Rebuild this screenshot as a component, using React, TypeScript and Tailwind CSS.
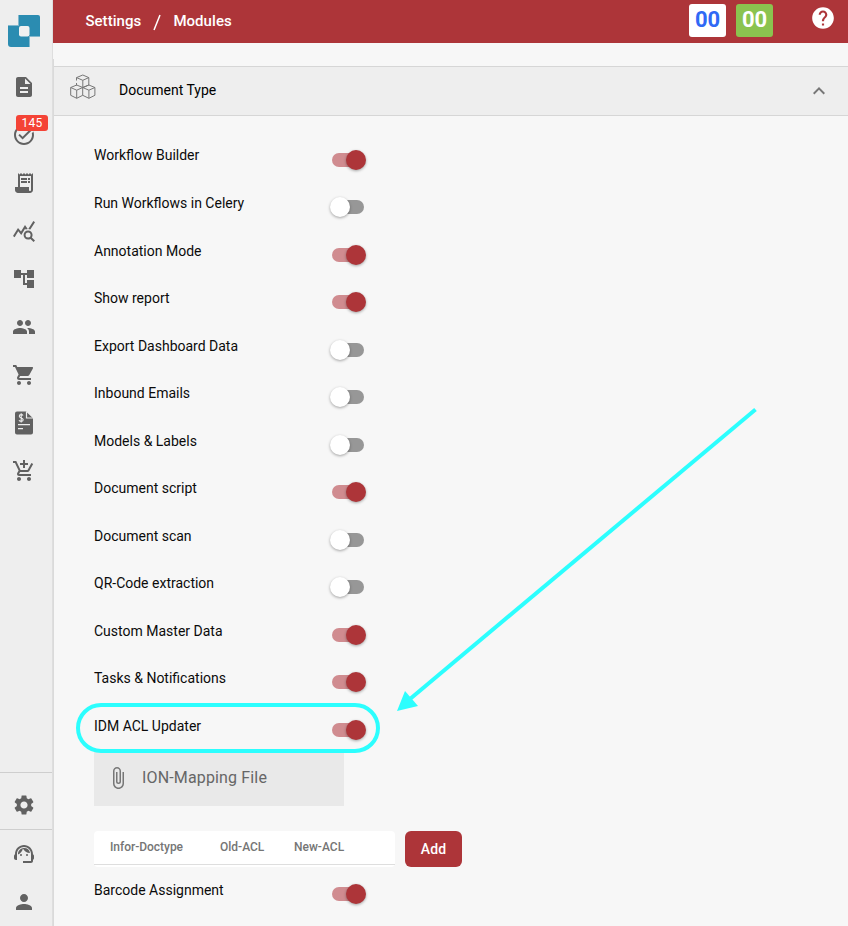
import React from "react";
import {
  MdDescription, MdTaskAlt, MdReceiptLong, MdQueryStats, MdAccountTree, MdPeople,
  MdShoppingCart, MdAddShoppingCart, MdSettings, MdSupportAgent, MdPerson, MdHelp,
  MdExpandLess, MdAttachFile,
} from "react-icons/md";

const modules: [string, boolean][] = [
  ["Workflow Builder", true],
  ["Run Workflows in Celery", false],
  ["Annotation Mode", true],
  ["Show report", true],
  ["Export Dashboard Data", false],
  ["Inbound Emails", false],
  ["Models & Labels", false],
  ["Document script", true],
  ["Document scan", false],
  ["QR-Code extraction", false],
  ["Custom Master Data", true],
  ["Tasks & Notifications", true],
  ["IDM ACL Updater", true],
];

function Toggle({ on }: { on: boolean }) {
  return (
    <div className={`mt-[8.5px] flex h-[14px] w-8 items-center rounded-full ${on ? "bg-[#d08c90]" : "bg-[#979797]"}`}>
      <div
        className={`size-5 shrink-0 rounded-full shadow-[0_1px_3px_rgba(0,0,0,0.35)] ${on ? "ml-[14px] bg-[#ad3539]" : "-ml-[2px] bg-white"}`}
      />
    </div>
  );
}

function Row({ label, on }: { label: string; on: boolean }) {
  return (
    <div className="flex h-[47.5px] shrink-0 items-center">
      <div className="w-[238px] text-sm leading-5 text-[#0b0b0b]">{label}</div>
      <Toggle on={on} />
    </div>
  );
}

function InvoiceIcon() {
  return (
    <svg width="18" height="24" viewBox="0 0 18 24" fill="none">
      <path d="M2 .5h9l7 6.800V21.500a2 2 0 0 1-2 2H2a2 2 0 0 1-2-2v-19a2 2 0 0 1 2-2Z" fill="#616161" />
      <path d="M11.500 1v6H18" stroke="#eee" strokeWidth="1.200" />
      <path d="M8 4.500C7.500 3.300 4.300 3.200 4.300 5.200c0 2.100 3.900 1.400 3.900 3.600 0 2.100-3.600 1.900-4.200.5M6.200 2.300v9.200" stroke="#eee" strokeWidth="1.100" />
      <path d="M3 13.700h12M3 17.600h5" stroke="#eee" strokeWidth="1.300" />
    </svg>
  );
}

function Cubes() {
  return (
    <svg width="26" height="26" viewBox="0 0 26 26" fill="none" stroke="#777" strokeWidth="1" strokeLinejoin="round">
      <path d="M6.500 11.500V9M6.500 6.500V3.600L12.800 1l6 2.600V11l-6 2.600M6.500 3.600l6.300 2.700 6-2.700M12.800 6.300v7.300" />
      <path d="M.7 13.500l6-2.500 6 2.500v7.800l-6 3-6-3ZM.7 13.500l6 2.700 6-2.700M6.700 16.200v8" />
      <path d="M12.700 13.500l6.200-2.500 6 2.500v7.800l-6 3-6.200-3M12.700 13.500l6.200 2.700 6-2.700M18.900 16.200v8" />
    </svg>
  );
}

function NavItem({ children }: { children: React.ReactNode }) {
  return <div className="flex h-12 w-12 items-center justify-center">{children}</div>;
}

export default function App() {
  return (
    <div className="relative flex h-[926px] w-[848px] overflow-hidden bg-[#f7f7f7] font-['Roboto','Liberation_Sans',sans-serif]">
      <aside className="flex w-[53px] shrink-0 flex-col border-r border-[#dedede] bg-[#eeeeee] text-[#616161]">
        <div className="h-[63px] pt-[15px] pl-2">
          <svg width="32" height="32" viewBox="0 0 32 32">
            <path d="M10.500 0H30a2 2 0 0 1 2 2v19.500H21.500V32H3a3 3 0 0 1-3-3V10.500h10.500Z" fill="#2b8cb1" />
            <path d="M10.500 0v10.500H0M32 21.500H21.500V32" stroke="#83b8cd" fill="none" />
            <rect x="11" y="11" width="10.500" height="10.500" rx="2" fill="#f1f1f1" />
          </svg>
        </div>
        <NavItem><MdDescription size={24} /></NavItem>
        <div className="relative">
          <NavItem><MdTaskAlt size={24} /></NavItem>
          <div className="absolute top-1 left-4 flex h-4 w-8 items-center justify-center rounded-[3px] bg-[#f44336] text-xs tracking-[0.2px] text-white">145</div>
        </div>
        <NavItem><MdReceiptLong size={24} /></NavItem>
        <NavItem><MdQueryStats size={24} /></NavItem>
        <NavItem><MdAccountTree size={24} /></NavItem>
        <NavItem><MdPeople size={24} /></NavItem>
        <NavItem><MdShoppingCart size={24} /></NavItem>
        <NavItem><InvoiceIcon /></NavItem>
        <NavItem><MdAddShoppingCart size={24} /></NavItem>
        <div className="mt-auto flex h-[58px] items-center border-y border-[#cecece] pt-2">
          <NavItem><MdSettings size={24} /></NavItem>
        </div>
        <NavItem><MdSupportAgent size={24} /></NavItem>
        <NavItem><MdPerson size={24} /></NavItem>
      </aside>

      <main className="flex min-w-0 flex-1 flex-col">
        <header className="flex h-[43px] shrink-0 items-center bg-[#ad3539] pl-[32.400px] text-white">
          <div className="flex text-[15px] leading-5 font-medium tracking-[0.050px]">
            <span className="w-[68px]">Settings</span>
            <svg className="mr-3 mt-[3px]" width="8" height="18" viewBox="0 0 8 18"><path d="M7 1 1 16" stroke="white" strokeWidth="1.500" /></svg>
            <span>Modules</span>
          </div>
          <div className="mr-[12px] mb-[3px] ml-auto flex items-center">
            <div className="flex h-[33px] w-[37px] items-center justify-center rounded-[3px] bg-white pb-0.5 text-[22px] font-bold text-[#3069f5]">00</div>
            <div className="ml-[10px] flex h-[33px] w-[37px] items-center justify-center rounded-[3px] bg-[#8bc34f] pb-0.5 text-[22px] font-bold">00</div>
            <MdHelp className="mb-1 ml-[37px]" size={26} />
          </div>
        </header>

        <div className="mt-4 flex min-h-0 flex-1 flex-col border-l border-[#dadada]">
          <div className="mt-[7px] flex h-[50px] shrink-0 items-center border-y border-[#d6d6d6] bg-[#eeeeee] pr-[17px] pl-4">
            <div className="mb-[8px]"><Cubes /></div>
            <div className="mb-0.5 ml-[23px] flex-1 text-sm leading-5 text-black">Document Type</div>
            <MdExpandLess size={24} className="text-[#777]" />
          </div>
          <div className="flex flex-col pt-[15.7px] pl-10">
            <div className="flex flex-col [&>*:first-child]:mb-[0.2px]">
              {modules.map(([label, on]) => <Row key={label} label={label} on={on} />)}
            </div>
            <div className="flex h-[57px] w-[250px] shrink-0 items-center bg-[#e9e9e9] pl-3">
              <MdAttachFile size={24} className="text-[#777]" />
              <div className="ml-3 text-base tracking-[0.150px] text-[#666]">ION-Mapping File</div>
            </div>
            <div className="mt-[24.6px] flex h-[35px] shrink-0">
              <div className="h-9 w-[301px] shrink-0 rounded bg-white text-xs font-medium text-[#757575]">
                <div className="flex h-[34px] items-center border-b border-[#dedede] pb-px pl-4">
                  <span className="w-[110px] tracking-[-0.030px]">Infor-Doctype</span>
                  <span className="w-[74px]">Old-ACL</span>
                  <span>New-ACL</span>
                </div>
              </div>
              <button className="ml-[10px] h-9 w-[57px] shrink-0 rounded-md bg-[#ad3539] text-sm font-medium tracking-[0.1px] text-white">Add</button>
            </div>
            <Row label="Barcode Assignment" on />
          </div>
        </div>
      </main>

      <svg className="absolute inset-0" width="848" height="926" viewBox="0 0 848 926" fill="none">
        <rect x="78" y="705" width="300" height="46" rx="23" stroke="#2cfefe" strokeWidth="4" />
        <path d="M755.500 409.500 410 699" stroke="#2cfefe" strokeWidth="4" />
        <path d="m397 711 8-20 13 15Z" fill="#2cfefe" />
      </svg>
    </div>
  );
}
